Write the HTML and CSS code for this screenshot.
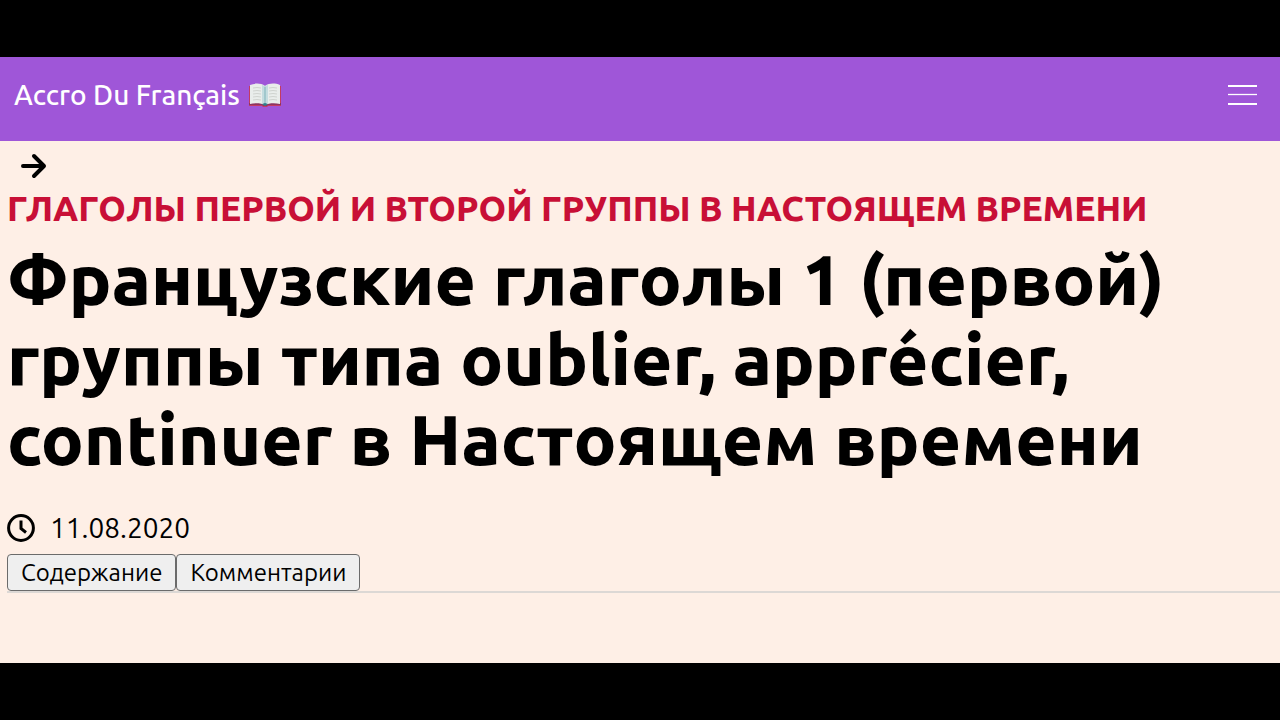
FILE: index.html
```html
<!DOCTYPE html>
<html lang="ru">
<head>
<meta charset="utf-8">
<meta name="viewport" content="width=device-width, initial-scale=1">
<title>Accro Du Français</title>
<link rel="stylesheet" href="styles.css">
</head>
<body>
<header class="site-header">
  <a class="brand" href="#">
    <span>Accro Du Français</span>
    <svg class="brand-icon" viewBox="0 0 34 24" role="img" aria-label="Книга">
      <path d="M1 3h32v20H20l-1 1h-4l-1-1H1z" fill="#c33b62"/>
      <path d="M1 20h32v2H20l-1 1h-4l-1-1H1z" fill="#8d3560"/>
      <path d="M2 2C7 0 13 0 17 3c4-3 10-3 15-1v19c-5-1-11-1-15 1-4-2-10-2-15-1z" fill="#e9edeb"/>
      <path d="M14 2l3 1 3-1v18l-3 2-3-2z" fill="#c4dcdf"/>
      <path d="M17 4v18" stroke="#7fb3ba" stroke-width="1"/>
      <path d="M14 21l3-1 3 1-3 2z" fill="#2f7f8c"/>
      <path d="M5 5q4-1 8 0M5 8q4-1 8 0M5 11q4-1 8 0M5 14q4-1 8 0M5 17q4-1 8 0M21 5q4-1 8 0M21 8q4-1 8 0M21 11q4-1 8 0M21 14q4-1 8 0M21 17q4-1 8 0" fill="none" stroke="#cfd3cf" stroke-width="1"/>
    </svg>
  </a>
  <button class="menu-button" type="button" aria-label="Меню">
    <svg class="menu-icon" viewBox="0 0 29 22" aria-hidden="true"><path d="M0 2h29M0 20h29"/><path d="M0 10.5h29" stroke-width="1.3"/></svg>
  </button>
</header>
<main class="article">
  <a class="next-link" href="#" aria-label="Далее">
    <svg class="arrow-icon" viewBox="0 0 26 26" aria-hidden="true"><path d="M2 13h20M13 3l10 10-10 10"/></svg>
  </a>
  <p class="category">Глаголы первой и второй группы в Настоящем времени</p>
  <h1 class="title">Французские глаголы 1 (первой) группы типа oublier, apprécier, continuer в Настоящем времени</h1>
  <div class="date">
    <svg class="clock-icon" viewBox="0 0 28 28" aria-hidden="true"><circle cx="14" cy="14" r="12.4"/><path d="M14 6.5v8l5 4"/></svg>
    <time datetime="2020-08-11">11.08.2020</time>
  </div>
  <div class="actions">
    <button class="action" type="button">Содержание</button>
    <button class="action" type="button">Комментарии</button>
  </div>
</main>
</body>
</html>
```
FILE: styles.css
```css
* {
  box-sizing: border-box;
}

body {
  display: flex;
  flex-direction: column;
  min-height: 100vh;
  margin: 0;
  padding: 57px 0;
  background: #000;
  color: #000;
  font-family: Ubuntu, "Noto Sans", sans-serif;
  font-weight: 400;
}

.site-header {
  display: flex;
  align-items: center;
  justify-content: space-between;
  padding: 16px 23px 24px 14px;
  background: #9f56d8;
}

.brand {
  display: flex;
  align-items: center;
  gap: 8px;
  color: #fff;
  font-size: 28px;
  font-weight: 500;
  line-height: 44px;
  text-decoration: none;
}

.brand-icon {
  width: 34px;
  height: 24px;
}

.menu-button {
  display: flex;
  padding: 0;
  border: 0;
  background: none;
}

.menu-icon {
  width: 29px;
  height: 22px;
  stroke: #fff;
  stroke-width: 2;
}

.article {
  flex: 1;
  padding: 12px 0 0 7px;
  background: #feefe6;
}

.next-link {
  display: flex;
  width: 26px;
  margin-left: 14px;
  color: #000;
}

.arrow-icon {
  width: 26px;
  height: 26px;
  fill: none;
  stroke: currentColor;
  stroke-width: 4;
  stroke-linecap: round;
  stroke-linejoin: round;
}

.category {
  margin: 7px 0 9px;
  color: #c80f36;
  font-size: 35px;
  font-weight: 900;
  line-height: 44px;
  text-transform: uppercase;
}

.title {
  max-width: 1200px;
  margin: 0 0 27px;
  font-size: 71px;
  font-weight: 900;
  line-height: 80px;
}

.date {
  display: flex;
  align-items: center;
  gap: 15px;
  margin-bottom: 4px;
  font-size: 28px;
  line-height: 44px;
}

.clock-icon {
  width: 28px;
  height: 28px;
  fill: none;
  stroke: #000;
  stroke-width: 3;
}

.actions {
  display: flex;
  border-bottom: 2px solid #dcd8d5;
}

.action {
  padding: 0 13px;
  border: 1px solid #6b6b6b;
  border-radius: 4px;
  background: #efefef;
  color: #000;
  font: inherit;
  font-size: 24px;
  line-height: 35px;
}
```
